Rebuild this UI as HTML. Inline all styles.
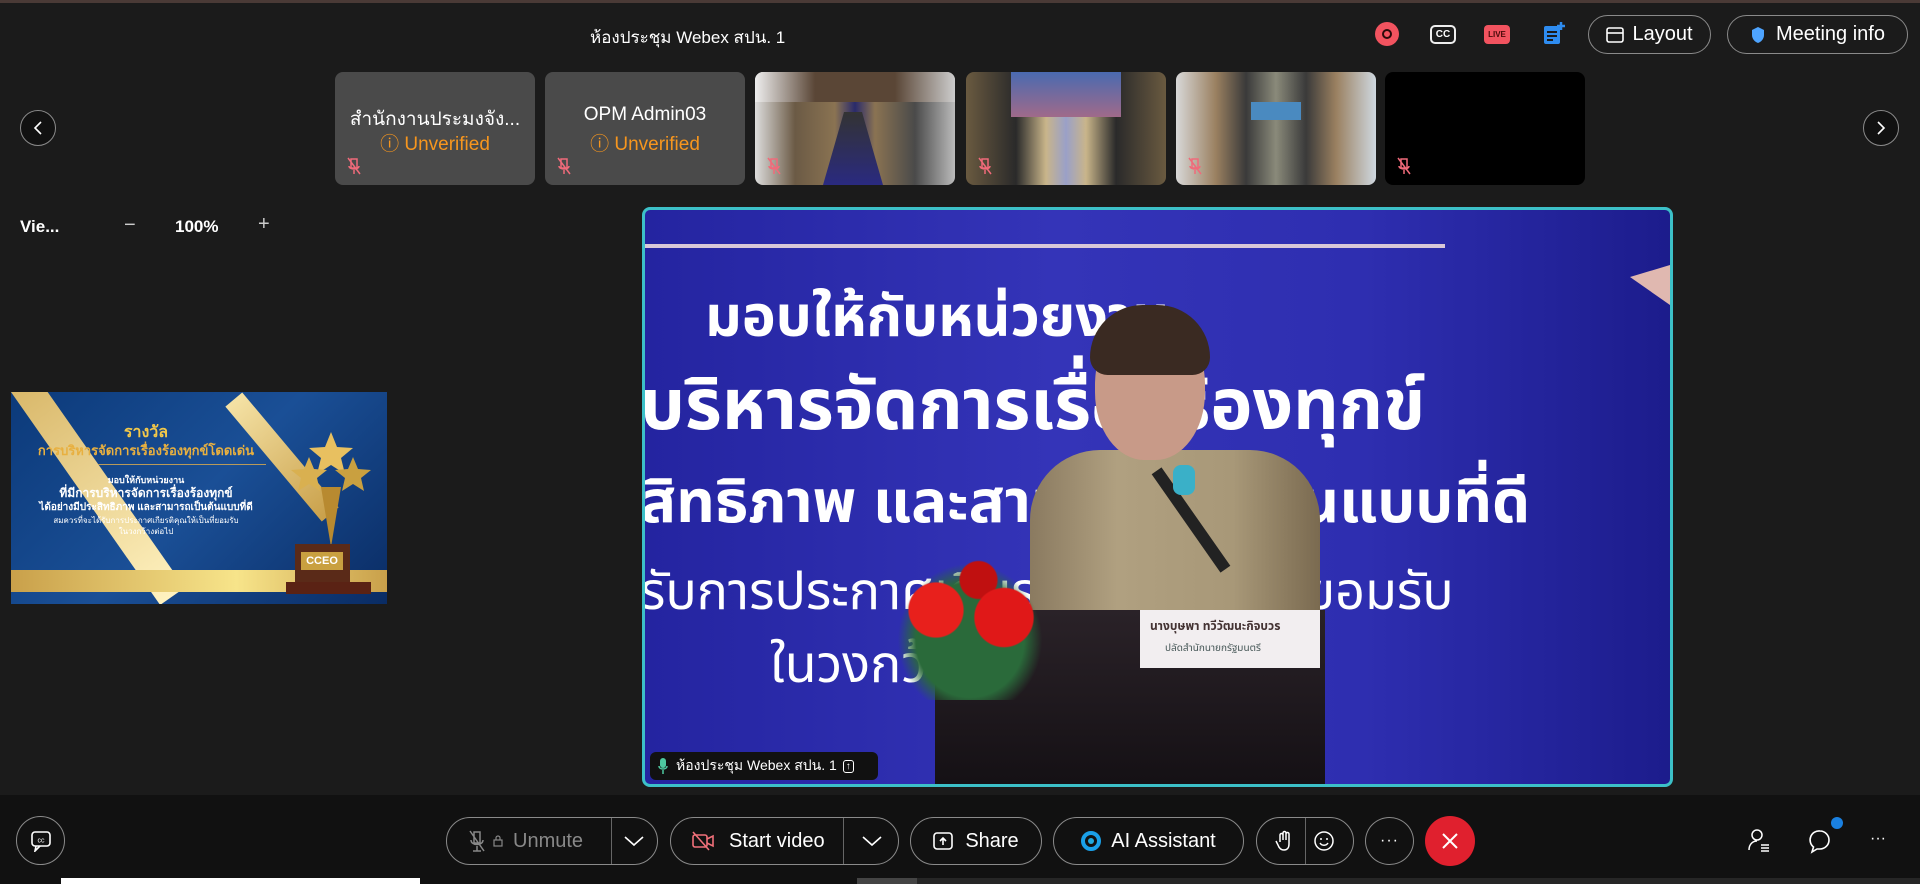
<!DOCTYPE html>
<html><head><meta charset="utf-8">
<style>
*{box-sizing:border-box;margin:0;padding:0}
body{width:1920px;height:884px;overflow:hidden;background:#1b1b1b;font-family:"Liberation Sans","Noto Sans CJK SC",sans-serif;color:#fff;position:relative}
.a{position:absolute}
.topline{left:0;top:0;width:1920px;height:3px;background:#4a3a36}
.pill{position:absolute;border:1.5px solid #8a8a8a;border-radius:24px;display:flex;align-items:center;justify-content:center;font-size:20px;color:#fff}
.thumb{position:absolute;top:72px;width:200px;height:113px;border-radius:8px;overflow:hidden}
.circ{position:absolute;border:1.5px solid #8a8a8a;border-radius:50%;display:flex;align-items:center;justify-content:center}
.mic{position:absolute;left:12px;bottom:10px;width:14px;height:18px}
.vt{position:absolute;color:#fff;font-family:"Liberation Sans","Noto Sans CJK SC","Noto Sans Thai",sans-serif;white-space:nowrap}
</style></head><body>
<div class="a topline"></div>
<div class="a" style="left:0;top:795px;width:1920px;height:89px;background:#111"></div>

<div class="a" style="left:590px;top:24px;font-size:17px">ห้องประชุม Webex สปน. 1</div>
<div class="a" style="left:1375px;top:22px;width:24px;height:24px;border-radius:50%;background:#f2535f;display:flex;align-items:center;justify-content:center"><div style="width:10px;height:10px;border:2px solid #2a0a0a;border-radius:50%"></div></div>
<div class="a" style="left:1430px;top:25px;width:26px;height:19px;border:2px solid #eee;border-radius:5px;font-size:10px;font-weight:bold;text-align:center;line-height:15px">CC</div>
<div class="a" style="left:1484px;top:25px;width:26px;height:19px;background:#f2535f;border-radius:4px;font-size:8px;font-weight:bold;text-align:center;line-height:19px;color:#4a0a0a">LIVE</div>
<svg class="a" style="left:1542px;top:20px" width="24" height="28" viewBox="0 0 24 28"><rect x="2" y="6" width="16" height="18" rx="2" fill="#2e8cf0"/><path d="M5 12h10M5 16h10M5 20h6" stroke="#1b1b1b" stroke-width="2"/><path d="M19 2v8M15 6h8" stroke="#2e8cf0" stroke-width="2.5"/></svg>
<div class="pill" style="left:1588px;top:15px;width:123px;height:39px"><svg width="18" height="16" style="margin-right:8px"><rect x="1" y="1" width="16" height="14" rx="2" fill="none" stroke="#fff" stroke-width="1.6"/><path d="M1 6h16" stroke="#fff" stroke-width="1.6"/></svg>Layout</div>
<div class="pill" style="left:1727px;top:15px;width:181px;height:39px"><svg width="16" height="18" style="margin-right:10px"><path d="M8 1l6 3v5c0 4-3 7-6 8-3-1-6-4-6-8V4z" fill="#4ea4ff"/></svg>Meeting info</div>

<div class="circ" style="left:20px;top:110px;width:36px;height:36px;background:#111"><svg width="12" height="16"><path d="M9 2L3 8l6 6" stroke="#fff" stroke-width="1.6" fill="none"/></svg></div>
<div class="circ" style="left:1863px;top:110px;width:36px;height:36px;background:#111"><svg width="12" height="16"><path d="M3 2l6 6-6 6" stroke="#fff" stroke-width="1.6" fill="none"/></svg></div>

<div class="thumb" style="left:335px;background:#4a4a4a"><div style="position:absolute;top:32px;width:100%;text-align:center;font-size:19px">สำนักงานประมงจัง...</div><div style="position:absolute;top:57px;width:100%;text-align:center;font-size:19px;color:#f7961e">ⓘ Unverified</div><svg class="mic" viewBox="0 0 14 18"><path d="M4 2h6v9H4zM2 9c0 4 10 4 10 0M7 13v4M1 1l12 16" stroke="#f06a7a" stroke-width="1.5" fill="none"/></svg></div>
<div class="thumb" style="left:545px;background:#4a4a4a"><div style="position:absolute;top:32px;width:100%;text-align:center;font-size:19px">OPM Admin03</div><div style="position:absolute;top:57px;width:100%;text-align:center;font-size:19px;color:#f7961e">ⓘ Unverified</div><svg class="mic" viewBox="0 0 14 18"><path d="M4 2h6v9H4zM2 9c0 4 10 4 10 0M7 13v4M1 1l12 16" stroke="#f06a7a" stroke-width="1.5" fill="none"/></svg></div>
<div class="thumb" style="left:755px;background:linear-gradient(90deg,#ddd 0%,#6b5a45 20%,#8a7352 40%,#2a2a6a 50%,#8a7352 60%,#4a4a4a 80%,#bbb 100%)"><div style="position:absolute;left:68px;top:40px;width:60px;height:73px;background:linear-gradient(#333,#2a2a80);clip-path:polygon(35% 0,65% 0,100% 100%,0 100%)"></div><div style="position:absolute;left:0;top:0;width:100%;height:30px;background:linear-gradient(90deg,#eee,#5a4636 30%,#5a4636 70%,#ccc)"></div><svg class="mic" viewBox="0 0 14 18"><path d="M4 2h6v9H4zM2 9c0 4 10 4 10 0M7 13v4M1 1l12 16" stroke="#f06a7a" stroke-width="1.5" fill="none"/></svg></div>
<div class="thumb" style="left:966px;background:linear-gradient(90deg,#6a5a40 0%,#2a2a2a 25%,#c9b58a 40%,#9aa0c8 50%,#c9b58a 60%,#2a2a2a 75%,#6a5a40 100%)"><div style="position:absolute;left:45px;top:0;width:110px;height:45px;background:linear-gradient(#4a6ab0,#a06a8a)"></div><svg class="mic" viewBox="0 0 14 18"><path d="M4 2h6v9H4zM2 9c0 4 10 4 10 0M7 13v4M1 1l12 16" stroke="#f06a7a" stroke-width="1.5" fill="none"/></svg></div>
<div class="thumb" style="left:1176px;background:linear-gradient(90deg,#d8d8d8 0%,#9a8060 20%,#3a3a3a 35%,#8a8a7a 50%,#3a3a3a 65%,#9a8060 80%,#cfd8e0 100%)"><div style="position:absolute;left:75px;top:30px;width:50px;height:18px;background:#4a8ac0"></div><svg class="mic" viewBox="0 0 14 18"><path d="M4 2h6v9H4zM2 9c0 4 10 4 10 0M7 13v4M1 1l12 16" stroke="#f06a7a" stroke-width="1.5" fill="none"/></svg></div>
<div class="thumb" style="left:1385px;background:#000"><svg class="mic" viewBox="0 0 14 18"><path d="M4 2h6v9H4zM2 9c0 4 10 4 10 0M7 13v4M1 1l12 16" stroke="#f06a7a" stroke-width="1.5" fill="none"/></svg></div>

<div class="a" style="left:20px;top:217px;font-size:17px;font-weight:bold">Vie...</div>
<div class="a" style="left:124px;top:214px;font-size:20px;color:#ccc">−</div>
<div class="a" style="left:175px;top:217px;font-size:17px;font-weight:bold">100%</div>
<div class="a" style="left:258px;top:213px;font-size:20px;color:#ccc">+</div>

<div class="a" style="left:11px;top:392px;width:376px;height:212px;background:linear-gradient(135deg,#0c3a7a,#1a4f96 50%,#0a2c64);overflow:hidden">
 <div class="a" style="left:0;top:0;width:30px;height:260px;background:linear-gradient(#d9b86a,#fff2c0);transform:rotate(-35deg);transform-origin:top left"></div>
 <div class="a" style="left:260px;top:-10px;width:22px;height:150px;background:linear-gradient(#f5e2a5,#c9a04a);transform:rotate(-40deg)"></div>
 <div class="a" style="left:0;top:178px;width:376px;height:22px;background:linear-gradient(90deg,#c9a04a,#f7e48a 60%,#c9a04a)"></div>
 <div class="a" style="left:0;top:28px;width:270px;text-align:center;font-size:16px;font-weight:bold;color:#f2c84a">รางวัล</div>
 <div class="a" style="left:0;top:48px;width:270px;text-align:center;font-size:13px;font-weight:bold;color:#e8b040">การบริหารจัดการเรื่องร้องทุกข์โดดเด่น</div>
 <div class="a" style="left:87px;top:72px;width:168px;height:1px;background:#b89a5a"></div>
 <div class="a" style="left:0;top:81px;width:270px;text-align:center;font-size:9px;font-weight:bold">มอบให้กับหน่วยงาน</div>
 <div class="a" style="left:0;top:92px;width:270px;text-align:center;font-size:12px;font-weight:bold">ที่มีการบริหารจัดการเรื่องร้องทุกข์</div>
 <div class="a" style="left:0;top:108px;width:270px;text-align:center;font-size:10px;font-weight:bold">ได้อย่างมีประสิทธิภาพ และสามารถเป็นต้นแบบที่ดี</div>
 <div class="a" style="left:0;top:122px;width:270px;text-align:center;font-size:8px">สมควรที่จะได้รับการประกาศเกียรติคุณให้เป็นที่ยอมรับ</div>
 <div class="a" style="left:0;top:133px;width:270px;text-align:center;font-size:8px">ในวงกว้างต่อไป</div>
 <svg class="a" style="left:280px;top:35px" width="80" height="120" viewBox="0 0 80 120"><path d="M40 5l6 15 16 1-12 10 4 16-14-9-14 9 4-16-12-10 16-1z" fill="#e8c060"/><path d="M18 30l5 12 13 1-10 8 3 13-11-7-11 7 3-13-10-8 13-1z" fill="#d9b050"/><path d="M62 30l5 12 13 1-10 8 3 13-11-7-11 7 3-13-10-8 13-1z" fill="#c9a040"/><path d="M30 60l10 60 10-60z" fill="#b88a30"/></svg>
 <div class="a" style="left:284px;top:152px;width:55px;height:40px;background:#5a2a18"></div>
 <div class="a" style="left:290px;top:160px;width:42px;height:18px;background:#c9a040;font-size:11px;font-weight:bold;text-align:center;line-height:18px">CCEO</div>
 <div class="a" style="left:275px;top:190px;width:85px;height:12px;background:#5a2214"></div>
</div>

<div class="a" style="left:642px;top:207px;width:1031px;height:580px;border:3px solid #3cc0c8;border-radius:8px;overflow:hidden;background:linear-gradient(90deg,#2424a0,#3434b8 40%,#2e2eb0 70%,#1c1c8c)">
 <div class="a" style="left:0;top:34px;width:800px;height:4px;background:#d8c8d8"></div>
 <div class="a" style="left:985px;top:55px;width:40px;height:40px;background:#e0b8b0;clip-path:polygon(0 30%,100% 0,100% 100%)"></div>
 <div class="vt" style="left:60px;top:66px;font-size:57px;font-weight:bold">มอบให้กับหน่วยงาน</div>
 <div class="vt" style="left:-5px;top:144px;font-size:71px;font-weight:bold">บริหารจัดการเรื่องร้องทุกข์</div>
 <div class="vt" style="left:-5px;top:248px;font-size:60px;font-weight:bold">สิทธิภาพ และสามารถเป็นต้นแบบที่ดี</div>
 <div class="vt" style="left:-5px;top:345px;font-size:52px">รับการประกาศเกียรติคุณให้เป็นที่ยอมรับ</div>
 <div class="vt" style="left:125px;top:418px;font-size:52px">ในวงกว้างต่อไป</div>
 <div class="a" style="left:385px;top:240px;width:290px;height:340px;background:linear-gradient(90deg,#8a7a60,#b0a080 30%,#a89878 70%,#7a6a50);border-radius:70px 70px 0 0"></div>
 <div class="a" style="left:450px;top:100px;width:110px;height:150px;border-radius:50% 50% 45% 45%;background:#c89a88"></div>
 <div class="a" style="left:445px;top:95px;width:120px;height:70px;border-radius:60px 60px 20px 20px;background:#3a2a22"></div>
 <div class="a" style="left:540px;top:250px;width:12px;height:120px;background:#222;transform:rotate(-35deg)"></div>
 <div class="a" style="left:528px;top:255px;width:22px;height:30px;border-radius:8px;background:#3ab0c8"></div>
 <div class="a" style="left:290px;top:400px;width:390px;height:180px;background:linear-gradient(#2a2228,#141014)"></div>
 <div class="a" style="left:495px;top:400px;width:180px;height:58px;background:#f2eef0"></div>
 <div class="vt" style="left:505px;top:408px;font-size:12px;color:#433;font-weight:bold">นางบุษพา ทวีวัฒนะกิจบวร</div>
 <div class="vt" style="left:520px;top:430px;font-size:10px;color:#455">ปลัดสำนักนายกรัฐมนตรี</div>
 <div class="a" style="left:240px;top:340px;width:170px;height:150px;background:radial-gradient(circle at 30% 40%,#e8201c 0 18%,transparent 19%),radial-gradient(circle at 70% 45%,#e01818 0 20%,transparent 21%),radial-gradient(circle at 55% 20%,#c01010 0 12%,transparent 13%),radial-gradient(ellipse at 50% 60%,#2a6a3a 0 45%,transparent 60%)"></div>
 <div class="a" style="left:5px;top:542px;width:228px;height:28px;background:#111;border-radius:6px;display:flex;align-items:center;font-size:14px;padding-left:8px;white-space:nowrap"><svg width="10" height="16" style="margin-right:8px;flex:none"><rect x="2" y="0" width="6" height="10" rx="3" fill="#4ec8a0"/><path d="M1 8c0 4 8 4 8 0M5 12v4" stroke="#4ec8a0" stroke-width="1.5" fill="none"/></svg>ห้องประชุม Webex สปน. 1<span style="margin-left:6px;border:1.5px solid #fff;border-radius:3px;font-size:10px;padding:0 2px">↑</span></div>
</div>

<div class="circ" style="left:16px;top:816px;width:49px;height:49px"><svg width="22" height="22"><rect x="2" y="2" width="18" height="14" rx="3" fill="none" stroke="#fff" stroke-width="1.6"/><path d="M6 16l-1 5 5-5" stroke="#fff" stroke-width="1.6" fill="none"/><text x="11" y="12.5" font-size="7" fill="#fff" text-anchor="middle" font-family="Liberation Sans">cc</text></svg></div>
<div class="pill" style="left:446px;top:817px;width:212px;height:48px;justify-content:flex-start;color:#888"><svg width="22" height="24" style="margin-left:20px"><path d="M7 3h6v11H7zM4 11c0 6 12 6 12 0M10 17v5M6 22h8M3 2l14 20" stroke="#888" stroke-width="1.5" fill="none"/></svg><svg width="10" height="12" style="margin:0 10px 0 4px"><rect x="1" y="5" width="8" height="6" fill="none" stroke="#888" stroke-width="1.2"/><path d="M3 5V3a2 2 0 014 0v2" stroke="#888" stroke-width="1.2" fill="none"/></svg>Unmute<div style="position:absolute;left:164px;top:0;width:1px;height:46px;background:#666"></div><svg style="position:absolute;left:176px;top:16px" width="22" height="14"><path d="M2 3l9 8 9-8" stroke="#fff" stroke-width="1.6" fill="none"/></svg></div>
<div class="pill" style="left:670px;top:817px;width:229px;height:48px;justify-content:flex-start"><svg width="24" height="22" style="margin-left:20px;margin-right:14px"><rect x="2" y="5" width="14" height="12" rx="2" fill="none" stroke="#f0707a" stroke-width="1.6"/><path d="M16 9l6-3v10l-6-3M2 2l16 18" stroke="#f0707a" stroke-width="1.6" fill="none"/></svg>Start video<div style="position:absolute;left:172px;top:0;width:1px;height:46px;background:#666"></div><svg style="position:absolute;left:190px;top:16px" width="22" height="14"><path d="M2 3l9 8 9-8" stroke="#fff" stroke-width="1.6" fill="none"/></svg></div>
<div class="pill" style="left:910px;top:817px;width:132px;height:48px"><svg width="20" height="18" style="margin-right:12px"><rect x="1" y="1" width="18" height="16" rx="3" fill="none" stroke="#fff" stroke-width="1.6"/><path d="M10 13V6M7 9l3-3 3 3" stroke="#fff" stroke-width="1.6" fill="none"/></svg>Share</div>
<div class="pill" style="left:1053px;top:817px;width:191px;height:48px"><svg width="20" height="20" style="margin-right:10px"><circle cx="10" cy="10" r="8" fill="none" stroke="#1aa0e8" stroke-width="4"/><circle cx="10" cy="10" r="3" fill="#2ad"/></svg>AI Assistant</div>
<div class="pill" style="left:1256px;top:817px;width:98px;height:48px"><svg width="18" height="22" style="margin-right:20px"><path d="M5 12V5a1.5 1.5 0 013 0v5V3a1.5 1.5 0 013 0v7V4a1.5 1.5 0 013 0v10c0 4-2 6-5 6s-5-2-6-5l-2-4" stroke="#fff" stroke-width="1.5" fill="none"/></svg><svg width="22" height="22"><circle cx="11" cy="11" r="9" fill="none" stroke="#fff" stroke-width="1.5"/><circle cx="8" cy="9" r="1" fill="#fff"/><circle cx="14" cy="9" r="1" fill="#fff"/><path d="M7 13c2 3 6 3 8 0" stroke="#fff" stroke-width="1.5" fill="none"/></svg><div style="position:absolute;left:48px;top:0;width:1px;height:46px;background:#666"></div></div>
<div class="circ" style="left:1365px;top:817px;width:49px;height:48px;font-size:16px;letter-spacing:1px">···</div>
<div class="a" style="left:1425px;top:816px;width:50px;height:50px;border-radius:50%;background:#e0202e;display:flex;align-items:center;justify-content:center"><svg width="18" height="18"><path d="M2 2l14 14M16 2L2 16" stroke="#fff" stroke-width="2"/></svg></div>
<svg class="a" style="left:1747px;top:828px" width="24" height="26"><circle cx="10" cy="7" r="5" fill="none" stroke="#fff" stroke-width="1.5"/><path d="M2 22c0-6 4-9 8-9" stroke="#fff" stroke-width="1.5" fill="none"/><path d="M14 17h8M14 20h8M14 23h8" stroke="#fff" stroke-width="1.5"/></svg>
<svg class="a" style="left:1808px;top:828px" width="26" height="26"><path d="M12 3a9 9 0 110 18H9l-5 3 1.5-5A9 9 0 0112 3z" fill="none" stroke="#fff" stroke-width="1.6"/></svg>
<div class="a" style="left:1831px;top:817px;width:12px;height:12px;border-radius:50%;background:#1a80e0"></div>
<div class="a" style="left:1870px;top:830px;font-size:16px">···</div>

<div class="a" style="left:61px;top:878px;width:359px;height:6px;background:#fff"></div>
<div class="a" style="left:857px;top:878px;width:60px;height:6px;background:#444"></div>
<div class="a" style="left:917px;top:878px;width:1003px;height:6px;background:#262626"></div>
</body></html>
